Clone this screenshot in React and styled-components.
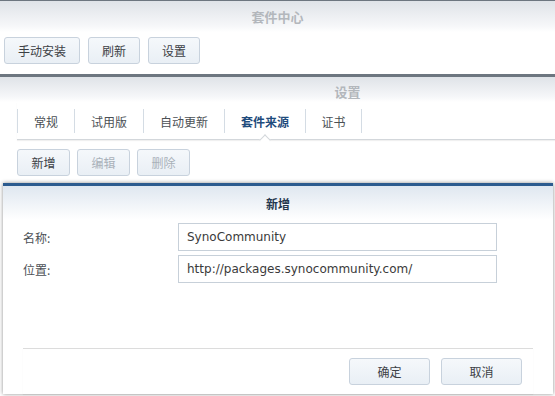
import React from "react";
import styled, { createGlobalStyle } from "styled-components";

const Global = createGlobalStyle`
  html, body { margin: 0; padding: 0; background: #fff; }
  *, *::before, *::after { box-sizing: border-box; }
  body {
    font-family: "DejaVu Sans", "Noto Sans CJK SC", sans-serif;
    font-size: 12px;
    color: #333;
  }
  #root { width: 555px; height: 396px; overflow: hidden; position: relative; }
`;

const Page = styled.div`
  width: 555px;
  height: 396px;
  position: relative;
  overflow: hidden;
  background: #fff;
`;

const Window = styled.section`
  border-top: ${(p) => p.$edge}px solid #6d7680;
  background: #fff;
`;

const Header = styled.div`
  height: ${(p) => p.$h}px;
  display: flex;
  align-items: center;
  justify-content: center;
  padding-left: ${(p) => p.$shift || 0}px;
  padding-top: ${(p) => p.$drop || 0}px;
  background: linear-gradient(#dfe3e8, #f6f7f9 80%, #fff);
  font-family: "Noto Sans CJK SC", sans-serif;
  font-weight: bold;
  font-size: 13px;
  color: #b3b7bc;
`;

const Toolbar = styled.div`
  display: flex;
  gap: ${(p) => p.$gap}px;
  padding: ${(p) => p.$pad};
`;

const Button = styled.button`
  height: 27px;
  width: ${(p) => p.$w}px;
  padding: 0;
  border: 1px solid #c8d2dd;
  border-radius: 3px;
  background: linear-gradient(#f5f8fb, #e9eff5);
  font-family: "Noto Sans CJK SC", sans-serif;
  font-size: 12px;
  color: ${(p) => (p.disabled ? "#a9b1b9" : "#3c4045")};
  cursor: default;
`;

const Tabs = styled.div`
  display: flex;
  margin: 0 0 0 17px;
  height: 38px;
  border-bottom: 1px solid #d3d7db;
  box-shadow: 0 1px 1px rgba(0, 0, 0, 0.06);
  position: relative;
`;

const Tab = styled.div`
  position: relative;
  width: ${(p) => p.$w}px;
  display: flex;
  align-items: center;
  justify-content: center;
  margin-top: 7px;
  height: 24px;
  border-left: 1px solid #d4dce4;
  ${(p) => p.$last && "border-right: 1px solid #d4dce4;"}
  font-family: "Noto Sans CJK SC", sans-serif;
  font-size: 12px;
  font-weight: ${(p) => (p.$active ? "bold" : "normal")};
  color: ${(p) => (p.$active ? "#1f4c7d" : "#4b5055")};
`;

const Notch = styled.span`
  position: absolute;
  left: 50%;
  bottom: -11px;
  width: 8px;
  height: 8px;
  background: #fff;
  border-left: 1px solid #d3d7db;
  border-top: 1px solid #d3d7db;
  transform: translate(-50%, 0) rotate(45deg);
`;

const Dialog = styled.div`
  position: absolute;
  left: 3px;
  top: 183px;
  width: 550px;
  height: 211px;
  background: #fff;
  border-top: 3px solid #2c5b8f;
  box-shadow: 0 0 4px rgba(0, 0, 0, 0.45);
  display: flex;
  flex-direction: column;
`;

const DialogHeader = styled.div`
  height: 34px;
  display: flex;
  align-items: center;
  justify-content: center;
  background: linear-gradient(#dfe7f0, #fff);
  font-family: "Noto Sans CJK SC", sans-serif;
  font-weight: bold;
  font-size: 12px;
  color: #24364d;
`;

const Form = styled.div`
  display: flex;
  flex-direction: column;
  gap: 4px;
  padding: 3px 0 0 20px;
  flex: 1;
`;

const Row = styled.div`
  display: grid;
  grid-template-columns: 155px 319px;
  align-items: center;
`;

const Label = styled.span`
  font-family: "Noto Sans CJK SC", sans-serif;
  font-size: 12px;
  color: #4b5055;
`;

const Input = styled.div`
  height: 28px;
  border: 1px solid #c7d0d9;
  display: flex;
  align-items: center;
  padding-left: 8px;
  font-family: "DejaVu Sans", sans-serif;
  font-size: 12px;
  color: #3a3a3a;
`;

const Footer = styled.div`
  margin: 0 20px;
  border-top: 1px solid #dcdcdc;
  box-shadow: 0 1px 1px rgba(0, 0, 0, 0.05);
  display: flex;
  justify-content: flex-end;
  gap: 11px;
  padding: 9px 11px 9px 0;
`;

export default function App() {
  return (
    <Page>
      <Global />
      <Window $edge={1}>
        <Header $h={31} $shift={-36}>套件中心</Header>
        <Toolbar $gap={8} $pad="5px 4px 10px 4px">
          <Button $w={76}>手动安装</Button>
          <Button $w={52}>刷新</Button>
          <Button $w={52}>设置</Button>
        </Toolbar>
      </Window>
      <Window $edge={3}>
        <Header $h={25} $shift={140} $drop={4}>设置</Header>
        <Tabs>
          <Tab $w={57}>常规</Tab>
          <Tab $w={69}>试用版</Tab>
          <Tab $w={81}>自动更新</Tab>
          <Tab $w={81} $active>
            套件来源
            <Notch />
          </Tab>
          <Tab $w={57} $last>证书</Tab>
        </Tabs>
        <Toolbar $gap={7} $pad="9px 17px 8px 17px">
          <Button $w={53}>新增</Button>
          <Button $w={53} disabled>编辑</Button>
          <Button $w={53} disabled>删除</Button>
        </Toolbar>
      </Window>
      <Dialog>
        <DialogHeader>新增</DialogHeader>
        <Form>
          <Row>
            <Label>名称:</Label>
            <Input>SynoCommunity</Input>
          </Row>
          <Row>
            <Label>位置:</Label>
            <Input>http://packages.synocommunity.com/</Input>
          </Row>
        </Form>
        <Footer>
          <Button $w={81}>确定</Button>
          <Button $w={81}>取消</Button>
        </Footer>
      </Dialog>
    </Page>
  );
}
